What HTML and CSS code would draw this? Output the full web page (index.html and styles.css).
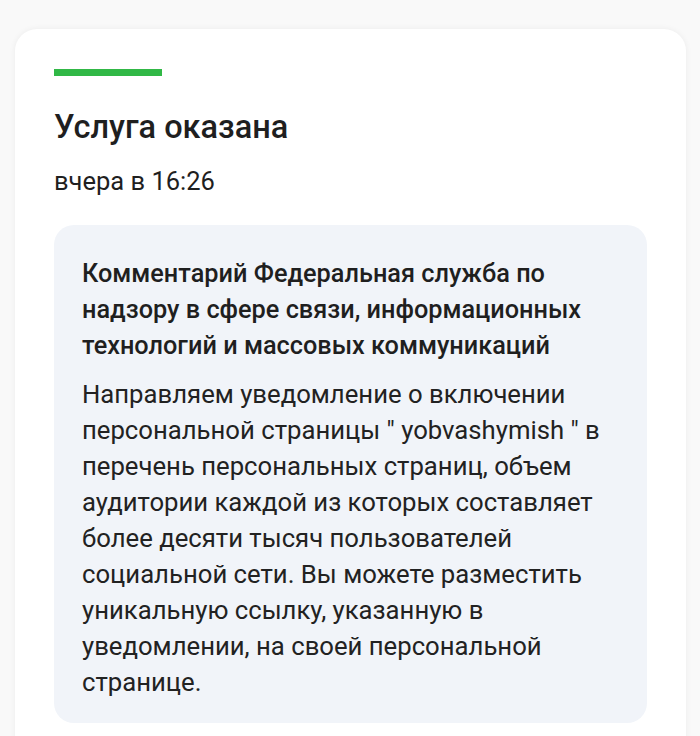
FILE: index.html
```html
<!DOCTYPE html>
<html lang="ru">
<head>
<meta charset="utf-8">
<link rel="stylesheet" href="styles.css">
</head>
<body>
<div class="card">
  <div class="accent"></div>
  <h1 class="title">Услуга оказана</h1>
  <div class="date">вчера в 16:26</div>
  <div class="comment">
    <div class="comment-title">Комментарий Федеральная служба по надзору в сфере связи, информационных технологий и массовых коммуникаций</div>
    <div class="comment-text">Направляем уведомление о включении персональной страницы " yobvashymish " в перечень персональных страниц, объем аудитории каждой из которых составляет более десяти тысяч пользователей социальной сети. Вы можете разместить уникальную ссылку, указанную в уведомлении, на своей персональной странице.</div>
  </div>
</div>
</body>
</html>
```
FILE: styles.css
```css
html, body {
  margin: 0;
  padding: 0;
}
body {
  background: #f9f9f9;
  font-family: Roboto, "Noto Sans", sans-serif;
  color: #1f1f1f;
  height: 736px;
  overflow: hidden;
}
.card {
  margin: 29px 14px 0 15px;
  background: #ffffff;
  border-radius: 22px;
  box-shadow: 0 0 6px rgba(0, 0, 0, 0.06);
  padding: 40px 39px 40px 39px;
  min-height: 800px;
}
.accent {
  width: 108px;
  height: 7px;
  background: #31b846;
}
.title {
  margin: 31px 0 0 0;
  font-size: 32.5px;
  line-height: 40px;
  font-weight: 500;
}
.date {
  margin-top: 18px;
  font-size: 25.5px;
  line-height: 32px;
}
.comment {
  margin-top: 28px;
  background: #f1f4f9;
  border-radius: 20px;
  padding: 31px 30px 23px 28px;
}
.comment-title {
  font-size: 25.3px;
  line-height: 36px;
  font-weight: 500;
}
.comment-text {
  margin-top: 12px;
  font-size: 25.7px;
  line-height: 36px;
  color: #222222;
}
```
